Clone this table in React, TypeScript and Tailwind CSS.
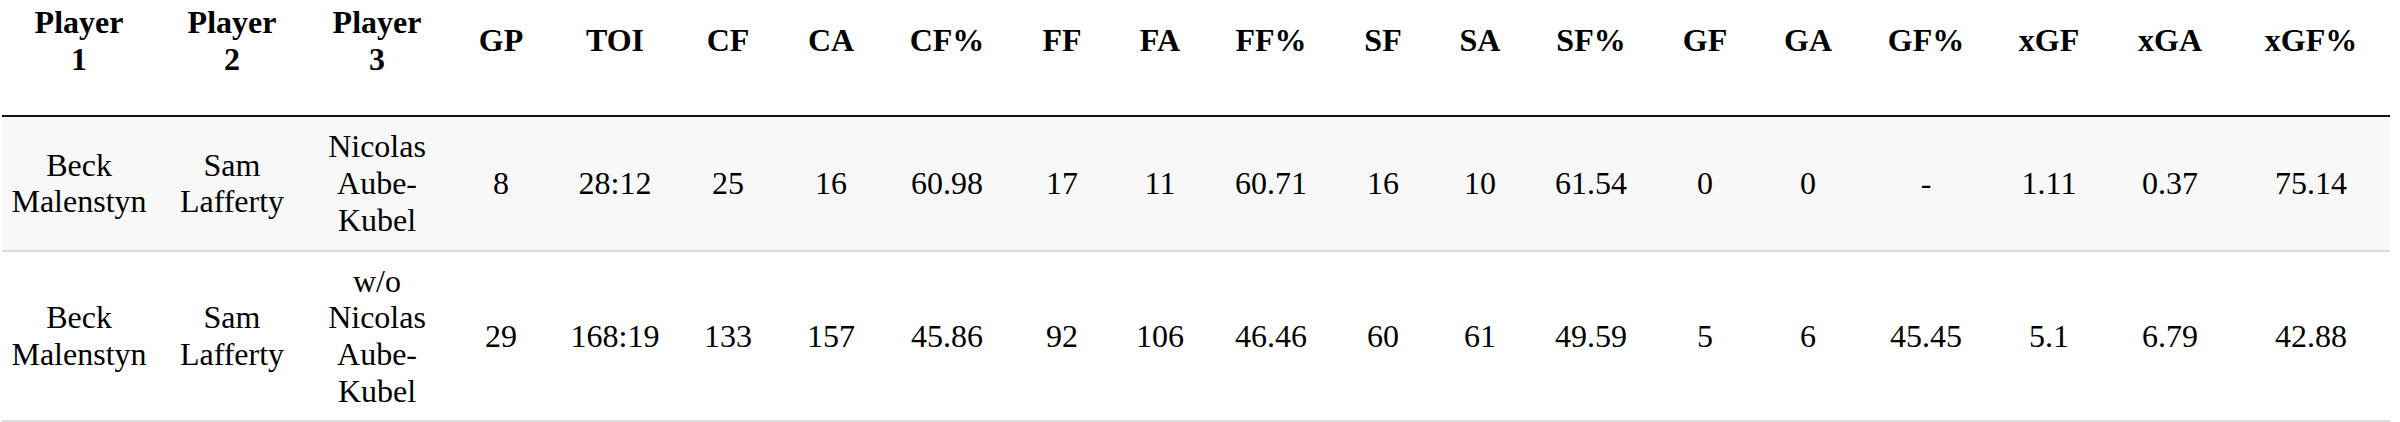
import React from 'react';

const cols = [
    'w-[154px]', 'w-[152px]', 'w-[138px]', 'w-[110px]', 'w-[118px]',
    'w-[108px]', 'w-[98px]', 'w-[134px]', 'w-[96px]', 'w-[100px]',
    'w-[122px]', 'w-[102px]', 'w-[92px]', 'w-[130px]', 'w-[98px]',
    'w-[108px]', 'w-[128px]', 'w-[118px]', 'w-[124px]', 'w-[158px]',
];

const stats = ['GP', 'TOI', 'CF', 'CA', 'CF%', 'FF', 'FA', 'FF%', 'SF', 'SA', 'SF%', 'GF', 'GA', 'GF%', 'xGF', 'xGA', 'xGF%'];

const rows = [
    {
        players: ['Beck Malenstyn', 'Sam Lafferty', 'Nicolas Aube-Kubel'],
        values: ['8', '28:12', '25', '16', '60.98', '17', '11', '60.71', '16', '10', '61.54', '0', '0', '-', '1.11', '0.37', '75.14'],
    },
    {
        players: ['Beck Malenstyn', 'Sam Lafferty', 'w/o Nicolas Aube-Kubel'],
        values: ['29', '168:19', '133', '157', '45.86', '92', '106', '46.46', '60', '61', '49.59', '5', '6', '45.45', '5.1', '6.79', '42.88'],
    },
];

export default function App() {
    return (
        <div className="bg-white w-[2400px] h-[422px] overflow-hidden font-['Liberation_Serif','Times_New_Roman',serif] text-[32px] leading-[36.7px] text-black">
            <table className="table-fixed border-collapse w-[2388px] ml-[2px]">
                <colgroup>
                    {cols.map((c, i) => (
                        <col key={i} className={c} />
                    ))}
                </colgroup>
                <thead>
                    <tr className="border-b-2 border-[#111]">
                        {[1, 2, 3].map((n) => (
                            <th key={n} className="px-2 pt-[4px] pb-[38px] font-bold text-center align-middle">
                                Player<br />{n}
                            </th>
                        ))}
                        {stats.map((s) => (
                            <th key={s} className="px-2 pt-[4px] pb-[38px] font-bold text-center align-middle">
                                {s}
                            </th>
                        ))}
                    </tr>
                </thead>
                <tbody>
                    {rows.map((r, i) => (
                        <tr key={i} className={`border-b-2 border-[#dddddd] ${i === 0 ? 'bg-[#f8f8f8]' : 'bg-white'}`}>
                            {r.players.map((p, j) => (
                                <td key={j} className="px-2 py-[11px] text-center align-middle">{p}</td>
                            ))}
                            {r.values.map((v, j) => (
                                <td key={'v' + j} className="px-2 py-[11px] text-center align-middle">{v}</td>
                            ))}
                        </tr>
                    ))}
                </tbody>
            </table>
        </div>
    );
}
